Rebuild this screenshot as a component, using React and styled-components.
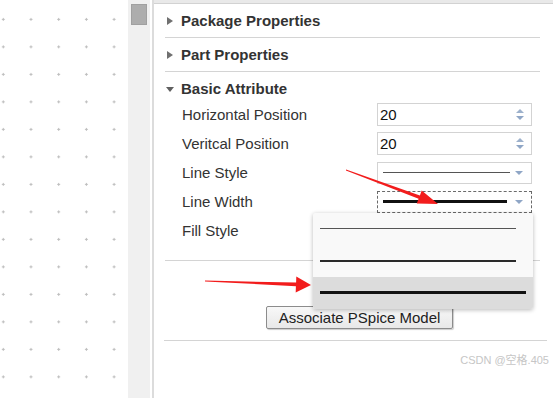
import React from 'react';
import styled, { createGlobalStyle } from 'styled-components';

const GlobalStyle = createGlobalStyle`
  html, body {
    margin: 0;
    padding: 0;
    background: #fff;
  }
  body {
    font-family: "Liberation Sans", Arial, sans-serif;
  }
`;

function arrowPoints(x1, y1, x2, y2, len, half, shaft) {
  const dx = x2 - x1;
  const dy = y2 - y1;
  const l = Math.hypot(dx, dy);
  const ux = dx / l;
  const uy = dy / l;
  const px = -uy;
  const py = ux;
  const bx = x2 - ux * len;
  const by = y2 - uy * len;
  const pts = [
    [x1 + px * 0.4, y1 + py * 0.4],
    [bx + px * shaft, by + py * shaft],
    [bx + px * half, by + py * half],
    [x2, y2],
    [bx - px * half, by - py * half],
    [bx - px * shaft, by - py * shaft],
    [x1 - px * 0.4, y1 - py * 0.4],
  ];
  return pts.map((p) => p.map((v) => v.toFixed(1)).join(',')).join(' ');
}

function App() {
  return (
    <Root>
      <GlobalStyle />
      <Canvas>
        <svg width="128" height="398">
          <defs>
            <pattern id="dots" x="1.8" y="17.9" width="27.7" height="27.5" patternUnits="userSpaceOnUse">
              <path d="M0 1.5H3M1.5 0V3" stroke="#bdbdbd" strokeWidth="1" />
            </pattern>
          </defs>
          <rect width="128" height="398" fill="url(#dots)" />
        </svg>
      </Canvas>
      <Scrollbar>
        <Thumb />
      </Scrollbar>
      <Panel>
        <TopStrip />
        <Header>
          <Caret />
          Package Properties
        </Header>
        <Divider />
        <Header>
          <Caret />
          Part Properties
        </Header>
        <Divider />
        <Header compact>
          <Caret open />
          Basic Attribute
        </Header>
        <PropRow>
          <Label>Horizontal Position</Label>
          <Field>
            <Value>20</Value>
            <Spinner>
              <Tri up />
              <Tri />
            </Spinner>
          </Field>
        </PropRow>
        <PropRow>
          <Label>Veritcal Position</Label>
          <Field>
            <Value>20</Value>
            <Spinner>
              <Tri up />
              <Tri />
            </Spinner>
          </Field>
        </PropRow>
        <PropRow>
          <Label>Line Style</Label>
          <Field select>
            <Stroke weight={1.5} width={127} />
            <Tri />
          </Field>
        </PropRow>
        <PropRow>
          <Label>Line Width</Label>
          <Field select focused>
            <Stroke weight={3} width={124} dark />
            <Tri />
            <Popup>
              <Option>
                <Stroke weight={1.5} width={196} />
              </Option>
              <Option>
                <Stroke weight={2} width={196} tone="#2a2a2a" />
              </Option>
              <Option active>
                <Stroke weight={3} width={206} dark />
              </Option>
            </Popup>
          </Field>
        </PropRow>
        <PropRow>
          <Label>Fill Style</Label>
        </PropRow>
        <Divider top={15} />
        <ButtonArea>
          <Button>Associate PSpice Model</Button>
        </ButtonArea>
        <Divider left={10} right={6} />
        <Watermark>CSDN @空格.405</Watermark>
      </Panel>
      <Annotations width="553" height="398">
        <polygon points={arrowPoints(346, 170, 438, 204, 20, 7, 1.8)} fill="#f21c1c" />
        <polygon points={arrowPoints(205, 281, 311, 285, 15, 8, 1.8)} fill="#f21c1c" />
      </Annotations>
    </Root>
  );
}

export default App;

const Root = styled.div`
  position: relative;
  display: flex;
  width: 553px;
  height: 398px;
  overflow: hidden;
  background: #fff;
`;

const Canvas = styled.div`
  width: 128px;
  flex-shrink: 0;
  line-height: 0;
`;

const Scrollbar = styled.div`
  width: 22px;
  flex-shrink: 0;
  background: #f0f0f0;
  padding: 4px 0 0 3px;
  box-sizing: border-box;
`;

const Thumb = styled.div`
  width: 16px;
  height: 21px;
  background: #adadad;
  border: 1px solid #a0a0a0;
  box-sizing: border-box;
`;

const Panel = styled.div`
  position: relative;
  flex: 1;
  margin-left: 2px;
  border-left: 2px solid #dcdcdc;
  color: #333;
`;

const TopStrip = styled.div`
  height: 3px;
  background: #e9e9e9;
  border-bottom: 1px solid #d2d2d2;
`;

const Header = styled.div`
  display: flex;
  align-items: center;
  gap: 7px;
  height: ${(p) => (p.compact ? 28 : 33)}px;
  padding: ${(p) => (p.compact ? '4px 0 0 12px' : '0 0 0 12px')};
  box-sizing: border-box;
  font-size: 15px;
  font-weight: bold;
  color: #333;
`;

const Caret = styled.span`
  width: 0;
  height: 0;
  margin-right: ${(p) => (p.open ? '0' : '1px')};
  ${(p) =>
    p.open
      ? `border-left: 4.5px solid transparent;
         border-right: 4.5px solid transparent;
         border-top: 5px solid #606060;
         margin-top: 2px;`
      : `border-top: 4.5px solid transparent;
         border-bottom: 4.5px solid transparent;
         border-left: 6px solid #707070;
         margin-left: 1px;`}
`;

const Divider = styled.div`
  height: 1px;
  background: #d4d4d4;
  margin: ${(p) => p.top || 0}px ${(p) => (p.right != null ? p.right : 13)}px 0
    ${(p) => (p.left != null ? p.left : 11)}px;
`;

const PropRow = styled.div`
  display: grid;
  grid-template-columns: 195px 155px;
  align-items: center;
  height: 29px;
  padding-left: 28px;
`;

const Label = styled.span`
  font-size: 15px;
  color: #333;
`;

const Field = styled.div`
  position: relative;
  display: flex;
  align-items: center;
  justify-content: space-between;
  height: ${(p) => (p.select ? 22 : 23)}px;
  box-sizing: border-box;
  border: 1px ${(p) => (p.focused ? 'dashed #6a6a6a' : 'solid #d3d3d3')};
  padding: ${(p) => (p.select ? '0 8px 0 5px' : '0 7px 0 2px')};
  background: #fff;
`;

const Value = styled.span`
  font-size: 15px;
  color: #111;
`;

const Spinner = styled.div`
  display: flex;
  flex-direction: column;
  gap: 3px;
`;

const Tri = styled.span`
  width: 0;
  height: 0;
  border-left: 4px solid transparent;
  border-right: 4px solid transparent;
  ${(p) => (p.up ? 'border-bottom: 4px solid #9db1cc;' : 'border-top: 4px solid #8fa6c6;')}
`;

const Stroke = styled.span`
  display: block;
  width: ${(p) => p.width}px;
  height: ${(p) => p.weight}px;
  background: ${(p) => p.tone || (p.dark ? '#111' : '#555')};
`;

const Popup = styled.div`
  position: absolute;
  top: calc(100% + 1px);
  left: -65px;
  width: 220px;
  z-index: 2;
  background: #f9f9f9;
  border-radius: 2px;
  box-shadow: 0 1px 4px rgba(0, 0, 0, 0.28);
  overflow: hidden;
`;

const Option = styled.div`
  display: flex;
  align-items: center;
  height: 32px;
  padding-left: 7px;
  background: ${(p) => (p.active ? '#dcdcdc' : 'transparent')};
`;

const ButtonArea = styled.div`
  height: 79px;
  padding: 45px 0 0 112px;
  box-sizing: border-box;
`;

const Button = styled.button`
  width: 187px;
  height: 23px;
  padding: 0;
  font-family: "Liberation Sans", Arial, sans-serif;
  font-size: 15px;
  color: #222;
  background: linear-gradient(#f8f8f8, #e8e8e8);
  border: 1px solid #8c8c8c;
  border-radius: 2px;
  box-shadow: 1px 1px 1px rgba(0, 0, 0, 0.2);
`;

const Watermark = styled.div`
  position: absolute;
  right: 4px;
  top: 351px;
  font-size: 11px;
  color: #c6c6c6;
  font-family: "Liberation Sans", "Noto Sans CJK SC", sans-serif;
`;

const Annotations = styled.svg`
  position: absolute;
  left: 0;
  top: 0;
  pointer-events: none;
  z-index: 5;
`;
